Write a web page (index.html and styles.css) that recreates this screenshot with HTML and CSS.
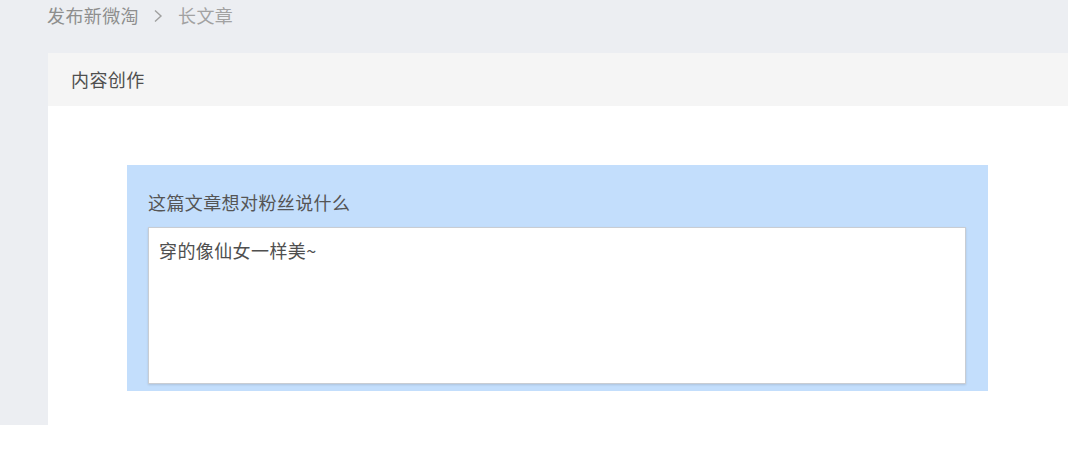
FILE: index.html
```html
<!DOCTYPE html>
<html lang="zh">
<head>
<meta charset="utf-8">
<title>长文章</title>
<link rel="stylesheet" href="styles.css">
</head>
<body>
<div class="app">
  <div class="crumbs">
    <span class="crumb">发布新微淘</span>
    <svg class="sep" width="10" height="14" viewBox="0 0 10 14"><path d="M2 1.5 L8 7 L2 12.5" fill="none" stroke="#a0a0a0" stroke-width="1.4"/></svg>
    <span class="crumb current">长文章</span>
  </div>
  <div class="panel">
    <div class="panel-head">内容创作</div>
    <div class="panel-body">
      <div class="say-box">
        <div class="say-label">这篇文章想对粉丝说什么</div>
        <div class="say-input">穿的像仙女一样美~</div>
      </div>
    </div>
  </div>
</div>
</body>
</html>
```
FILE: styles.css
```css
html, body {
  margin: 0;
  padding: 0;
  background: #ffffff;
}
body {
  font-family: "Noto Sans CJK SC", "Noto Sans", sans-serif;
  width: 1080px;
  height: 450px;
  overflow: hidden;
}
.app {
  width: 1068px;
  height: 425px;
  background: #eceef2;
  display: flex;
  flex-direction: column;
}
.crumbs {
  height: 53px;
  box-sizing: border-box;
  padding: 4px 0 0 47px;
  display: flex;
  align-items: flex-start;
  gap: 14px;
  font-size: 18px;
  letter-spacing: 0.4px;
  line-height: 22px;
  color: #8e8e8e;
}
.crumb.current {
  color: #a2a2a2;
  margin-left: 1px;
}
.sep {
  margin-top: 5px;
}
.panel {
  margin-left: 48px;
  flex: 1;
  background: #ffffff;
  display: flex;
  flex-direction: column;
}
.panel-head {
  height: 53px;
  background: #f5f5f5;
  box-sizing: border-box;
  padding: 15px 0 0 23px;
  font-size: 18px;
  letter-spacing: 0.4px;
  line-height: 22px;
  color: #4f4f4f;
}
.panel-body {
  padding: 59px 0 0 79px;
}
.say-box {
  width: 861px;
  height: 226px;
  box-sizing: border-box;
  background: #c3defc;
  padding: 26px 22px 0 21px;
}
.say-label {
  font-size: 18px;
  letter-spacing: 0.4px;
  line-height: 22px;
  color: #555555;
  margin-bottom: 14px;
}
.say-input {
  width: 818px;
  height: 157px;
  box-sizing: border-box;
  background: #ffffff;
  border: 1px solid #c9cdd3;
  box-shadow: 0 1px 2px rgba(0,0,0,0.12);
  padding: 11px 10px;
  font-size: 18px;
  letter-spacing: 0.4px;
  line-height: 22px;
  color: #4f4f4f;
}
```
